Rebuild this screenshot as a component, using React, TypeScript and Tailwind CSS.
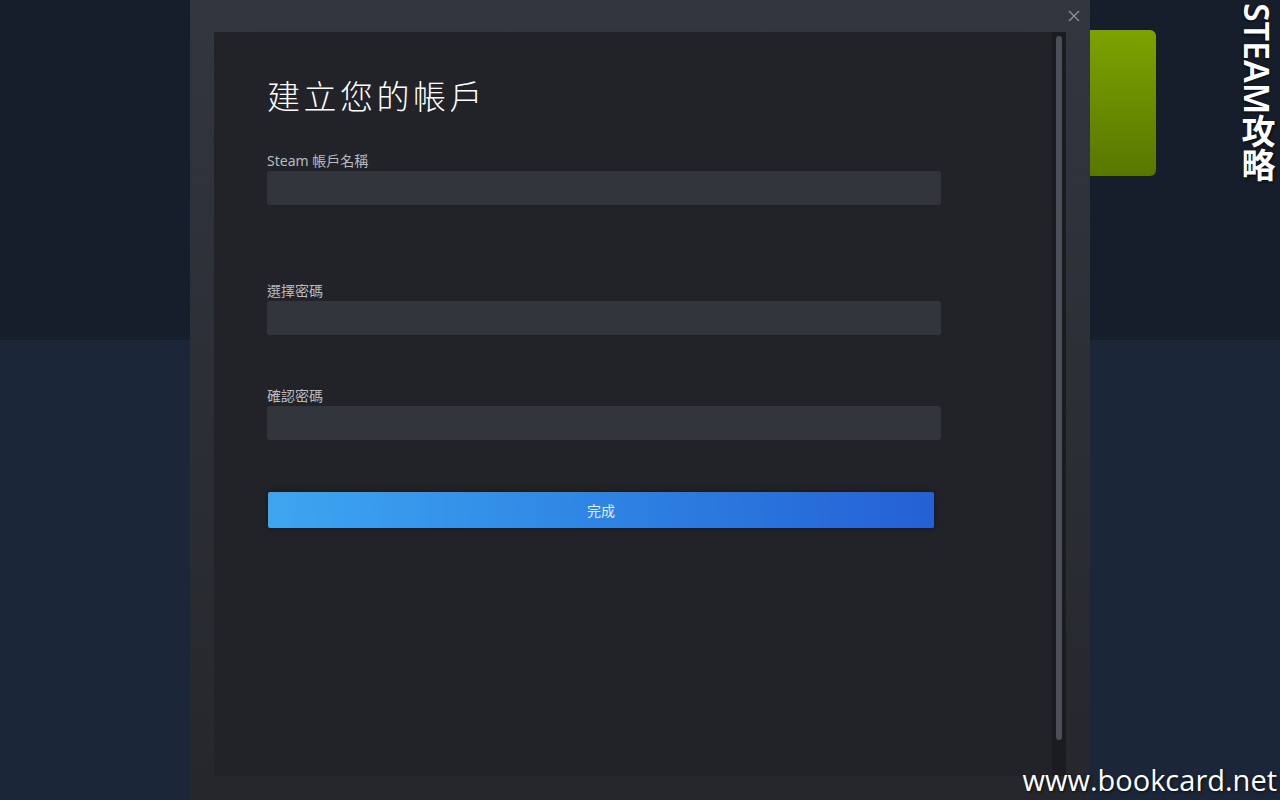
import React from "react";

const cjk = { fontFamily: '"Noto Sans", "Noto Sans CJK TC", sans-serif' };

const Field = ({ label, className }: { label: string; className?: string }) => (
  <div className={`flex flex-col ${className ?? ""}`}>
    <label className="text-[14px] leading-[18px] text-[#b8bcbf]">{label}</label>
    <input
      type="text"
      className="mt-[1px] h-[34px] w-[674px] rounded-[3px] bg-[#32353c] outline-none"
    />
  </div>
);

export default function App() {
  return (
    <div className="relative h-[800px] w-[1280px] overflow-hidden" style={cjk}>
      {/* page behind */}
      <div className="flex h-full flex-col">
        <div className="h-[340px] bg-[#161e2b]" />
        <div className="flex-1 bg-[#1b2739]" />
      </div>

      {/* green button behind modal */}
      <div className="absolute left-[1060px] top-[30px] h-[146px] w-[96px] rounded-[6px] bg-gradient-to-b from-[#7da300] to-[#587700]" />

      {/* modal */}
      <div className="absolute left-[190px] top-0 flex h-[800px] w-[900px] flex-col bg-gradient-to-b from-[#32363f] to-[#25272c]">
        <div className="flex h-[32px] justify-end pr-[8px] pt-[8px]">
          <svg width="16" height="16" viewBox="0 0 16 16" className="text-[#8b9099]">
            <path d="M3 3 L13 13 M13 3 L3 13" stroke="currentColor" strokeWidth="1.4" />
          </svg>
        </div>
        <div className="ml-[24px] flex h-[744px] w-[852px] bg-[#212328]">
          <div className="flex flex-1 flex-col pl-[53px] pt-[43px]">
            <h1 className="text-[33px] font-light leading-[44px] tracking-[3.5px] text-white">建立您的帳戶</h1>
            <Field label="Steam 帳戶名稱" className="mt-[33px]" />
            <Field label="選擇密碼" className="mt-[77px]" />
            <Field label="確認密碼" className="mt-[52px]" />
            <button className="ml-[1px] mt-[52px] h-[36px] w-[666px] rounded-[2px] bg-gradient-to-r from-[#3ea6f1] to-[#2560d5] text-[14px] text-[#e6eef6] shadow-[0_0_6px_rgba(0,0,0,0.4)]">
              完成
            </button>
          </div>
          <div className="flex w-[14px] justify-center bg-[#1b1c1f] pt-[4px]">
            <div className="h-[704px] w-[6px] rounded-full bg-[#4a4f5a]" />
          </div>
        </div>
      </div>

      {/* watermarks */}
      <div
        className="absolute left-[1238px] top-[3px] text-[34px] font-semibold leading-[38px] text-white [writing-mode:vertical-rl] [text-shadow:1px_1px_3px_rgba(0,0,0,0.8)]"
        style={{ fontFamily: '"Noto Sans", "Noto Sans CJK TC", sans-serif' }}
      >
        STEAM攻略
      </div>
      <div
        className="absolute right-[3px] top-[762px] text-[29px] leading-[36px] text-white [text-shadow:1px_1px_3px_rgba(0,0,0,0.8)]"
        style={{ fontFamily: '"Open Sans", sans-serif', fontWeight: 500 }}
      >
        www.bookcard.net
      </div>
    </div>
  );
}
